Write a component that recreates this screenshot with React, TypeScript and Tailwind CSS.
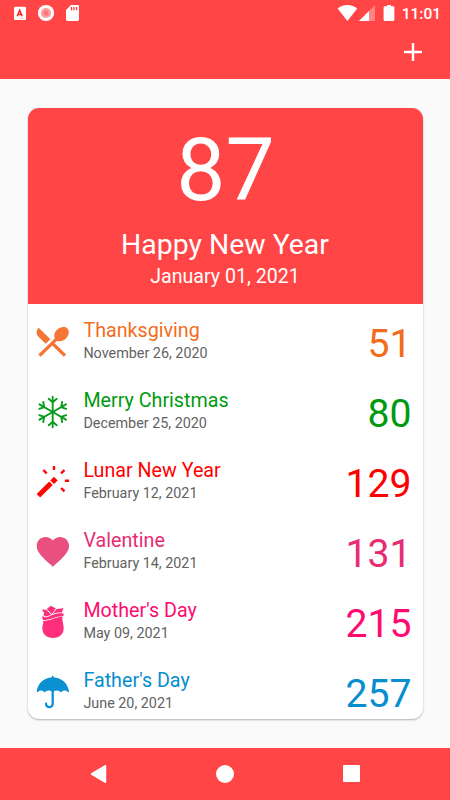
import React from 'react';

const StatusBar: React.FC = () => (
  <div className="h-[27px] shrink-0 flex items-center justify-between pl-[14px] pr-[9px]">
    <svg width="66" height="27" viewBox="14 0 66 27" fill="#fff">
      <rect x="14" y="6.7" width="12" height="13.3" rx="1" />
      <path d="M17.300 16.300L19.700 10.200L22.100 16.300M18.200 14.400h3" fill="none" stroke="#ff2222" strokeWidth="1.500" />
      <path d="M20.300 18.300h3.500" stroke="#ffb5b5" strokeWidth="1" />
      <circle cx="46" cy="13" r="8.1" />
      <circle cx="46" cy="13" r="5.1" fill="#ff9c9c" />
      <circle cx="46" cy="13" r="2.4" fill="#ff7474" />
      <path d="M71 5h6.6a1.4 1.4 0 0 1 1.4 1.4v13.2a1.4 1.4 0 0 1-1.4 1.4H67.400a1.4 1.4 0 0 1-1.400-1.400V10z" />
      <path d="M71.500 7v3.200M74 7v3.200M76.500 7v3.200" stroke="#ff3838" strokeWidth="1.300" />
    </svg>
    <div className="flex items-center">
      <svg width="60" height="27" viewBox="337 0 60 27" fill="#fff">
        <path d="M347.400 21L337.600 8.500C340.300 6.300 343.600 5 347.400 5s7.100 1.300 9.800 3.500z" />
        <path d="M375 5v16h-16z" fill="#ff8585" />
        <path d="M369 11v10h-10z" />
        <path d="M387 5h4v1.300h2.200a1.200 1.200 0 0 1 1.200 1.200v12.300a1.200 1.200 0 0 1-1.200 1.200h-8.400a1.200 1.200 0 0 1-1.200-1.200V7.500a1.200 1.200 0 0 1 1.200-1.200H387z" />
      </svg>
      <span className="w-[44px] text-right text-[15.500px] leading-[28px] font-medium text-white">11:01</span>
    </div>
  </div>
);

const Utensils = () => (
  <g transform="translate(-2.900 -2.100) scale(1.680 1.640)" fill="#f47536">
    <path d="M8.100 13.340l2.830-2.830L3.910 3.500c-1.560 1.560-1.560 4.090 0 5.660l4.190 4.180zm6.780-1.810c1.530.710 3.680.210 5.270-1.380 1.910-1.910 2.280-4.650.810-6.120-1.460-1.460-4.200-1.100-6.120.810-1.590 1.590-2.090 3.740-1.380 5.270L3.700 19.870l1.410 1.410L12 14.410l6.880 6.880 1.410-1.410L13.410 13l1.470-1.470z" />
  </g>
);

const Snowflake = () => (
  <g fill="none" stroke="#0a9a1c" strokeWidth="1.900" strokeLinecap="round">
    {[0, 60, 120, 180, 240, 300].map((angle) => (
      <path key={angle} d="M17.700 18V2.700M17.700 8.200l-4-3.400M17.700 8.200l4-3.400" transform={`rotate(${angle} 17.700 18)`} />
    ))}
  </g>
);

const Wand = () => (
  <g fill="none" stroke="#ff0505">
    <path d="M3.400 31.800L16 19.300" strokeWidth="5" />
    <path d="M19 13l3.400 3.400-3.400 3.400-3.400-3.400z" fill="#ff0505" strokeWidth=".5" strokeLinejoin="round" />
    <path d="M19 2v4M8.300 6l3.400 3.400M29.500 6l-3.400 3.400M29.900 16.700h4.200M26.100 24l3.400 3.400" strokeWidth="2.400" />
  </g>
);

const Heart = () => (
  <path
    transform="translate(-1.550 -1.850) scale(1.617)"
    fill="#e94f7f"
    d="M12 21.350l-1.450-1.320C5.400 15.360 2 12.280 2 8.500 2 5.420 4.420 3 7.500 3c1.740 0 3.410.810 4.500 2.090C13.090 3.810 14.760 3 16.500 3 19.580 3 22 5.420 22 8.500c0 3.780-3.400 6.860-8.550 11.540L12 21.350z"
  />
);

const Rose = () => (
  <g fill="#ff2f7c">
    {/* bulb, wrapping petal, then the petals on top */}
    <path d="M27.500 12.800C26.700 15.500 28.700 20 28.700 24C28.700 30.200 24.300 34 18 34C11.700 34 7.300 30.200 7.300 24C7.300 21.500 8.600 19.500 8.300 16.900C15.500 17 19.500 13.100 27.500 12.800z" />
    <path d="M28.800 9.700C28.900 10.600 28.600 11.500 28 12.200C19.800 12.200 15.500 16.100 8.200 16.200C7.400 14.600 7.200 13.300 7.500 11.700C9.500 13.600 11.500 13.900 14 12.600C18.500 10.300 22.500 8.600 28.800 9.700z" />
    <path d="M6.800 5.400L11.300 5.800L16.100 10.500C13.500 12.300 10.500 13.300 8.300 11.300L9.200 8.900z" />
    <path d="M11.700 5L16 1.700L20.900 4.600L16.800 10z" />
    <path d="M21.500 5L28.600 4.300L26.700 8.700C23.500 8.200 20.800 8.800 17.700 10z" />
  </g>
);

const Umbrella = () => (
  <g fill="#0b90d2">
    <path d="M16.900 3.200V2.500a.8.8 0 0 1 1.600 0v.7C26 3.700 33 8.600 34 17.700C33.800 18.300 33.400 18.400 32.900 17.900C30.500 15.900 28.100 16 26 18.400C23.900 16 20.200 15.500 17.700 18.400C15.300 15.500 11.600 16 9.500 18.400C7.400 16 5.200 15.900 2.700 17.900C2.200 18.400 1.800 18.200 1.700 17.700C2.700 8.600 9.500 3.700 16.900 3.200z" />
    <path d="M17.700 17v12.700a3.300 3.300 0 0 1-6.700 0" fill="none" stroke="#0b90d2" strokeWidth="2.300" strokeLinecap="round" />
  </g>
);

const EventList: React.FC = () => {
  const events = [
    { title: 'Thanksgiving', date: 'November 26, 2020', days: 51, color: 'text-[#f26c1c]', icon: <Utensils /> },
    { title: 'Merry Christmas', date: 'December 25, 2020', days: 80, color: 'text-[#009a10]', icon: <Snowflake /> },
    { title: 'Lunar New Year', date: 'February 12, 2021', days: 129, color: 'text-[#ff0000]', icon: <Wand /> },
    { title: 'Valentine', date: 'February 14, 2021', days: 131, color: 'text-[#e82c74]', icon: <Heart /> },
    { title: "Mother's Day", date: 'May 09, 2021', days: 215, color: 'text-[#ff0a70]', icon: <Rose /> },
    { title: "Father's Day", date: 'June 20, 2021', days: 257, color: 'text-[#078dd0]', icon: <Umbrella /> },
  ];

  return (
    <div>
      {events.map((event) => (
        <div key={event.title} className="h-[70px] flex items-start pl-[7.400px] pr-[11px]">
          <svg width="36" height="36" viewBox="0 0 36 36" className="mt-5 shrink-0">
            {event.icon}
          </svg>
          <div className="ml-[12.500px] mt-[15px] flex-1">
            <h3 className={`text-[19.700px] leading-6 ${event.color}`}>{event.title}</h3>
            <p className="text-[14.350px] leading-[21px] text-[#626262]">{event.date}</p>
          </div>
          <span className={`mt-[16px] text-[39.200px] leading-[48px] ${event.color}`}>{event.days}</span>
        </div>
      ))}
    </div>
  );
};

const App: React.FC = () => {
  return (
    <div className="w-[450px] h-[800px] flex flex-col overflow-hidden bg-[#fafafa] font-[Roboto,sans-serif]">
      <header className="h-[78.500px] shrink-0 bg-[#ff4545]">
        <StatusBar />
        <div className="flex justify-end pr-[28px] pt-4">
          <svg width="18" height="18" viewBox="0 0 18 18" stroke="#fff" strokeWidth="2.400">
            <path d="M9 0v18M0 9h18" />
          </svg>
        </div>
      </header>

      <main className="flex-1 min-h-0 px-[27.500px] pt-[29px] pb-[29px]">
        <section className="h-full rounded-[11px] overflow-hidden bg-white shadow-[0_1px_2px_rgba(0,0,0,0.3)]">
          <div className="h-[196px] bg-[#ff4545] text-white text-center pt-[10px]">
            <div className="pl-[1px] text-[87.500px] leading-[104px]">87</div>
            <h2 className="mt-[6px] text-[28.400px] leading-[34px]">Happy New Year</h2>
            <p className="mt-[3px] text-[19.600px] leading-6">January 01, 2021</p>
          </div>
          <EventList />
        </section>
      </main>

      {/* System navigation */}
      <nav className="h-[52.500px] shrink-0 bg-[#ff4545] flex items-center justify-between pl-[88px] pr-[90px]">
        <svg width="20" height="20" viewBox="0 0 20 20" fill="#fff" stroke="#fff" strokeWidth="1.500" strokeLinejoin="round">
          <path d="M3.500 10L17.500 1.700v16.600z" />
        </svg>
        <div className="w-[18px] h-[18px] mr-[2px] rounded-full bg-white" />
        <div className="w-[17px] h-[17px] rounded-[1px] bg-white" />
      </nav>
    </div>
  );
};

export default App;
